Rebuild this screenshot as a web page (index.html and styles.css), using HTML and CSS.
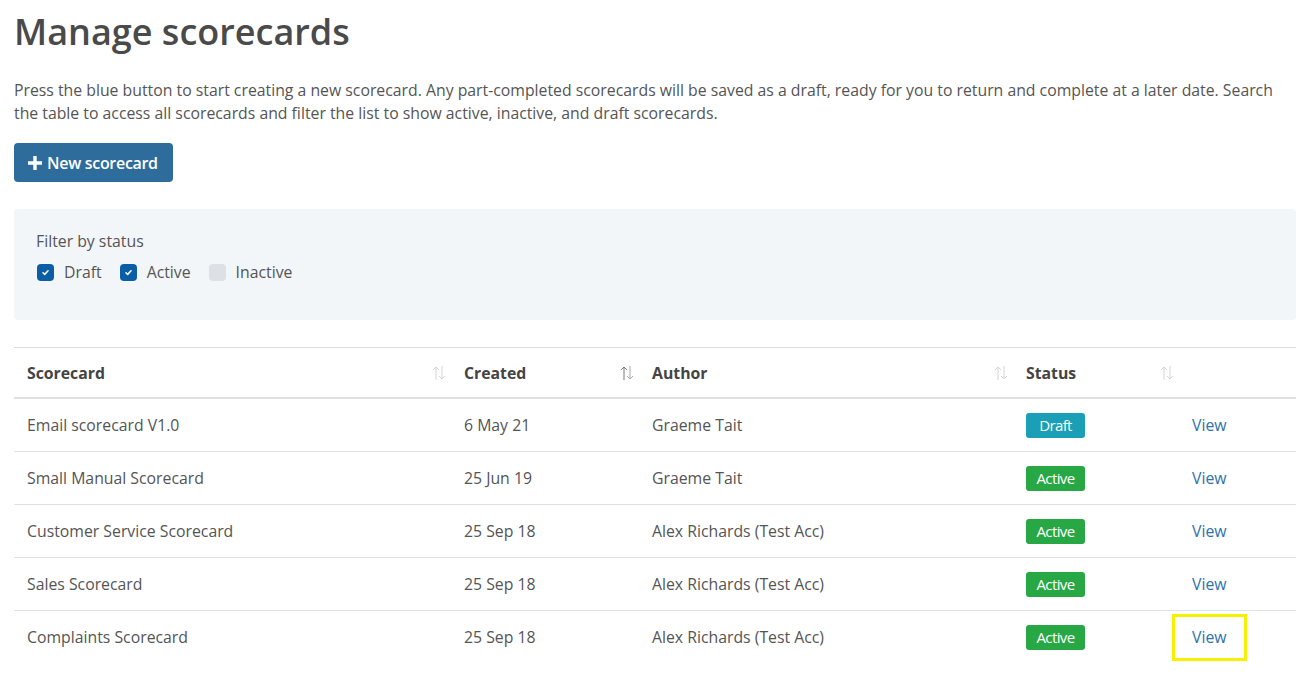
FILE: index.html
```html
<!DOCTYPE html>
<html lang="en">
<head>
<meta charset="utf-8">
<title>Manage scorecards</title>
<link rel="stylesheet" href="styles.css">
</head>
<body>
<main class="page">
  <h1 class="title">Manage scorecards</h1>
  <p class="intro">Press the blue button to start creating a new scorecard. Any part-completed scorecards will be saved as a draft, ready for you to return and complete at a later date. Search the table to access all scorecards and filter the list to show active, inactive, and draft scorecards.</p>
  <button class="btn-new" type="button">
    <svg class="plus" viewBox="0 0 14 14" width="14" height="14" aria-hidden="true"><path d="M5.3 0h3.4v5.3H14v3.4H8.7V14H5.3V8.7H0V5.3h5.3z" fill="#fff"/></svg>
    <span>New scorecard</span>
  </button>

  <section class="filter">
    <div class="filter-label">Filter by status</div>
    <div class="filter-options">
      <label class="opt"><span class="cb checked"><svg viewBox="0 0 10 10" width="9" height="9"><path d="M2.2 5.3l1.9 1.8 3.7-4" fill="none" stroke="#fff" stroke-width="1.7" stroke-linecap="round" stroke-linejoin="round"/></svg></span>Draft</label>
      <label class="opt"><span class="cb checked"><svg viewBox="0 0 10 10" width="9" height="9"><path d="M2.2 5.3l1.9 1.8 3.7-4" fill="none" stroke="#fff" stroke-width="1.7" stroke-linecap="round" stroke-linejoin="round"/></svg></span>Active</label>
      <label class="opt"><span class="cb"></span>Inactive</label>
    </div>
  </section>

  <table class="grid">
    <colgroup>
      <col class="c1"><col class="c2"><col class="c3"><col class="c4"><col class="c5">
    </colgroup>
    <thead>
      <tr>
        <th><div class="th-in">Scorecard<svg class="sort" viewBox="0 0 14 16" width="14" height="16"><path d="M4 15V2M1 5l3-3 3 3" fill="none" stroke="#d4d4d4" stroke-width="1"/><path d="M10 1v13M7 11l3 3 3-3" fill="none" stroke="#d4d4d4" stroke-width="1"/></svg></div></th>
        <th><div class="th-in">Created<svg class="sort" viewBox="0 0 14 16" width="14" height="16"><path d="M4 15V2M1 5l3-3 3 3" fill="none" stroke="#777" stroke-width="1"/><path d="M10 1v13M7 11l3 3 3-3" fill="none" stroke="#aaa" stroke-width="1"/></svg></div></th>
        <th><div class="th-in">Author<svg class="sort" viewBox="0 0 14 16" width="14" height="16"><path d="M4 15V2M1 5l3-3 3 3" fill="none" stroke="#d4d4d4" stroke-width="1"/><path d="M10 1v13M7 11l3 3 3-3" fill="none" stroke="#d4d4d4" stroke-width="1"/></svg></div></th>
        <th><div class="th-in">Status<svg class="sort" viewBox="0 0 14 16" width="14" height="16"><path d="M4 15V2M1 5l3-3 3 3" fill="none" stroke="#d4d4d4" stroke-width="1"/><path d="M10 1v13M7 11l3 3 3-3" fill="none" stroke="#d4d4d4" stroke-width="1"/></svg></div></th>
        <th></th>
      </tr>
    </thead>
    <tbody>
      <tr><td>Email scorecard V1.0</td><td>6 May 21</td><td>Graeme Tait</td><td><span class="badge draft">Draft</span></td><td><a class="view" href="#">View</a></td></tr>
      <tr><td>Small Manual Scorecard</td><td>25 Jun 19</td><td>Graeme Tait</td><td><span class="badge active">Active</span></td><td><a class="view" href="#">View</a></td></tr>
      <tr><td>Customer Service Scorecard</td><td>25 Sep 18</td><td>Alex Richards (Test Acc)</td><td><span class="badge active">Active</span></td><td><a class="view" href="#">View</a></td></tr>
      <tr><td>Sales Scorecard</td><td>25 Sep 18</td><td>Alex Richards (Test Acc)</td><td><span class="badge active">Active</span></td><td><a class="view" href="#">View</a></td></tr>
      <tr><td>Complaints Scorecard</td><td>25 Sep 18</td><td>Alex Richards (Test Acc)</td><td><span class="badge active">Active</span></td><td><a class="view highlight" href="#">View</a></td></tr>
    </tbody>
  </table>
</main>
</body>
</html>
```
FILE: styles.css
```css
html, body {
  margin: 0;
  padding: 0;
  background: #fff;
}
body {
  font-family: "Open Sans", "Liberation Sans", sans-serif;
  color: #555;
  font-size: 15.8px;
}
.page {
  padding: 0 15px 0 14px;
}
.title {
  margin: 0;
  padding-top: 8px;
  font-size: 36px;
  font-weight: 600;
  color: #4a4a4a;
  line-height: 48px;
}
.intro {
  margin: 23px 0 0;
  max-width: 1272px;
  font-size: 15.8px;
  line-height: 23px;
  color: #555;
}
.btn-new {
  margin-top: 18px;
  display: inline-flex;
  align-items: center;
  gap: 5px;
  height: 39px;
  padding: 0 15px 0 14px;
  background: #2e6c9c;
  color: #fff;
  border: 0;
  border-radius: 4px;
  font-family: inherit;
  font-size: 16px;
  font-weight: 600;
  letter-spacing: -0.3px;
}
.plus {
  display: block;
}
.filter {
  margin-top: 27px;
  background: #f3f6f9;
  border-radius: 4px;
  padding: 21px 22px 34px;
  height: 56px;
}
.filter-label {
  font-size: 15.8px;
  line-height: 22px;
  color: #555;
}
.filter-options {
  display: flex;
  gap: 18px;
  margin-top: 9px;
}
.opt {
  display: flex;
  align-items: center;
  gap: 10px;
  font-size: 15.8px;
  line-height: 22px;
  color: #555;
}
.opt:first-child { margin-left: 1px; }
.cb {
  width: 17px;
  height: 17px;
  border-radius: 4px;
  background: #dde1e6;
  display: flex;
  align-items: center;
  justify-content: center;
}
.cb.checked {
  background: #0b5ea6;
}
.grid {
  margin-top: 27px;
  width: 100%;
  border-collapse: collapse;
  table-layout: fixed;
  border-top: 1px solid #dedede;
}
.c1 { width: 437px; }
.c2 { width: 188px; }
.c3 { width: 374px; }
.c4 { width: 166px; }
.grid th {
  text-align: left;
  font-weight: 700;
  color: #444;
  font-size: 15.8px;
  height: 49px;
  padding: 0 5px 0 13px;
  border-bottom: 2px solid #e1e1e1;
}
.th-in {
  display: flex;
  justify-content: space-between;
  align-items: center;
}
.sort {
  display: block;
  margin-top: 1px;
}
.grid td {
  height: 52px;
  padding: 0 13px;
  border-bottom: 1px solid #e1e1e1;
  font-size: 15.8px;
  color: #555;
}
.grid tbody tr:last-child td {
  border-bottom: 0;
}
.badge {
  display: inline-block;
  width: 59px;
  height: 25px;
  line-height: 25px;
  text-align: center;
  border-radius: 3px;
  color: #fff;
  font-size: 15px;
  letter-spacing: -0.6px;
}
.badge.draft { background: #1a9fb6; }
.badge.active { background: #28a745; }
.view {
  color: #2d72ad;
  text-decoration: none;
  position: relative;
}
.view.highlight::after {
  content: "";
  position: absolute;
  left: -20px;
  right: -20px;
  top: -12px;
  bottom: -13px;
  border: 3px solid #f7f000;
}
```
